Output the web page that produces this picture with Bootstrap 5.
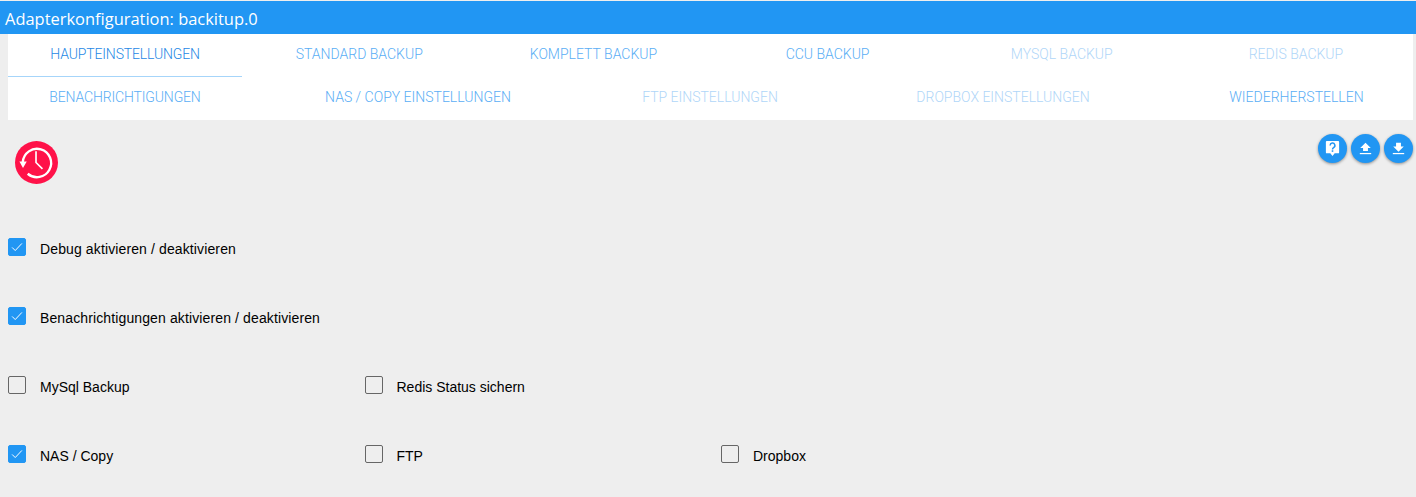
<!DOCTYPE html>
<html lang="de">
<head>
<meta charset="utf-8">
<title>Adapterkonfiguration: backitup.0</title>
<link rel="stylesheet" href="https://cdn.jsdelivr.net/npm/bootstrap@5.3.0/dist/css/bootstrap.min.css">
<style>
html, body { height: 100%; }
body { background: #eeeeee; font-family: "Liberation Sans", Arial, sans-serif; font-size: 14px; color: #000; overflow: hidden; padding-top: 1px; }
.app-title { height: 33px; background: #2196f3; color: #fff; font-family: "Open Sans", sans-serif; font-size: 16.45px; line-height: 36px; padding-left: 5px; white-space: nowrap; }
.tab-panel { margin: 0 3px 0 8px; background: #fff; height: 86px; }
.tab-row { display: grid; height: 43px; }
.tab-row-a { grid-template-columns: repeat(6, 1fr); }
.tab-row-b { grid-template-columns: 234px 352px 232px 354px 233px; }
.tab-item { display: flex; align-items: center; justify-content: center; font-family: Roboto, sans-serif; font-weight: 300; font-size: 14px; color: #5aaef5; text-decoration: none; white-space: nowrap; text-transform: uppercase; border-bottom: 1px solid transparent; padding-bottom: 2px; }
.tab-item.is-active { color: #1e88e5; border-bottom-color: #a6d5fa; }
.tab-item.is-off { color: #b0d6f8; }
.tab-item.is-tight { letter-spacing: -.15px; }
.tool-bar { height: 120px; padding: 14px 3px 0 15px; }
.logo-disc { width: 43px; height: 43px; margin-top: 7px; flex: none; }
.round-btn { width: 29px; height: 29px; padding: 0; border: 0; border-radius: 50%; background: #2196f3; box-shadow: 0 1px 3px rgba(0,0,0,.4); display: flex; align-items: center; justify-content: center; }
.opt-list { padding-left: 8px; display: flex; flex-direction: column; gap: 51px; }
.opt-row { display: flex; height: 18px; }
.opt-cell { flex: 0 0 356.5px; display: flex; align-items: center; }
.opt-box { appearance: none; width: 18px; height: 18px; flex: none; margin: 0 14px 0 0; border: 1px solid #666; border-radius: 2px; background: transparent; position: relative; top: -2px; }
.opt-box:checked { border-color: #2196f3; background-color: #2196f3; background-image: url("data:image/svg+xml,%3Csvg xmlns='http://www.w3.org/2000/svg' viewBox='0 0 18 18'%3E%3Cpath d='M3.500 9.500l3.500 3.500L14.500 5' fill='none' stroke='%23fff' stroke-width='1.100'/%3E%3C/svg%3E"); }
.opt-cell label { line-height: 18px; }
.opt-cell label.opt-stretch { letter-spacing: .12px; }
</style>
</head>
<body>
<div class="app-title">Adapterkonfiguration: backitup.0</div>
<nav class="tab-panel">
  <div class="tab-row tab-row-a">
    <a class="tab-item is-active is-tight" href="#">Haupteinstellungen</a>
    <a class="tab-item" href="#">Standard Backup</a>
    <a class="tab-item" href="#">Komplett Backup</a>
    <a class="tab-item" href="#">CCU Backup</a>
    <a class="tab-item is-off" href="#">MySql Backup</a>
    <a class="tab-item is-off" href="#">Redis Backup</a>
  </div>
  <div class="tab-row tab-row-b">
    <a class="tab-item is-tight" href="#">Benachrichtigungen</a>
    <a class="tab-item" href="#">NAS / Copy Einstellungen</a>
    <a class="tab-item is-off" href="#">FTP Einstellungen</a>
    <a class="tab-item is-off" href="#">Dropbox Einstellungen</a>
    <a class="tab-item" href="#">Wiederherstellen</a>
  </div>
</nav>
<div class="tool-bar d-flex justify-content-between align-items-start">
  <svg class="logo-disc" viewBox="0 0 44 44" aria-label="backitup">
    <circle cx="22" cy="22" r="22" fill="#ff1249"/>
    <path d="M8 21.500A14.500 14.500 0 1 1 13 33.500" fill="none" stroke="#fff" stroke-width="2.400"/>
    <path d="M4.500 21h7.500l-3.800 6.500z" fill="#fff"/>
    <path d="M21.500 10.500v11.500l6.600 6.600" fill="none" stroke="#fff" stroke-width="1.700"/>
  </svg>
  <div class="d-flex gap-1">
    <button class="round-btn" type="button" aria-label="Hilfe">
      <svg width="15" height="17" viewBox="0 0 17 19"><path d="M2 1h13a1 1 0 0 1 1 1v12a1 1 0 0 1-1 1h-4l-2.500 3-2.500-3H2a1 1 0 0 1-1-1V2a1 1 0 0 1 1-1z" fill="#fff"/><path d="M5.800 6a2.700 2.700 0 1 1 4 2.400c-1 .6-1.300 1-1.300 2.100" fill="none" stroke="#2196f3" stroke-width="1.700"/><rect x="7.600" y="11.500" width="1.800" height="1.800" fill="#2196f3"/></svg>
    </button>
    <button class="round-btn" type="button" aria-label="Hochladen">
      <svg width="13" height="13" viewBox="0 0 16 16"><path d="M8 1l6.500 6.500H11V11H5V7.500H1.500z" fill="#fff"/><rect x="1" y="13.500" width="14" height="1.500" fill="#fff"/></svg>
    </button>
    <button class="round-btn" type="button" aria-label="Herunterladen">
      <svg width="13" height="13" viewBox="0 0 16 16"><path d="M5 1h6v4.500h3.500L8 12 1.500 5.500H5z" fill="#fff"/><rect x="1" y="13.500" width="14" height="1.500" fill="#fff"/></svg>
    </button>
  </div>
</div>
<div class="opt-list">
  <div class="opt-row"><div class="opt-cell"><input class="opt-box" id="o1" type="checkbox" checked><label class="opt-stretch" for="o1">Debug aktivieren / deaktivieren</label></div></div>
  <div class="opt-row"><div class="opt-cell flex-grow-1"><input class="opt-box" id="o2" type="checkbox" checked><label class="opt-stretch" for="o2">Benachrichtigungen aktivieren / deaktivieren</label></div></div>
  <div class="opt-row">
    <div class="opt-cell"><input class="opt-box" id="o3" type="checkbox"><label for="o3">MySql Backup</label></div>
    <div class="opt-cell"><input class="opt-box" id="o4" type="checkbox"><label for="o4">Redis Status sichern</label></div>
  </div>
  <div class="opt-row">
    <div class="opt-cell"><input class="opt-box" id="o5" type="checkbox" checked><label for="o5">NAS / Copy</label></div>
    <div class="opt-cell"><input class="opt-box" id="o6" type="checkbox"><label for="o6">FTP</label></div>
    <div class="opt-cell"><input class="opt-box" id="o7" type="checkbox"><label for="o7">Dropbox</label></div>
  </div>
</div>
<script src="https://cdn.jsdelivr.net/npm/bootstrap@5.3.0/dist/js/bootstrap.bundle.min.js"></script>
</body>
</html>
